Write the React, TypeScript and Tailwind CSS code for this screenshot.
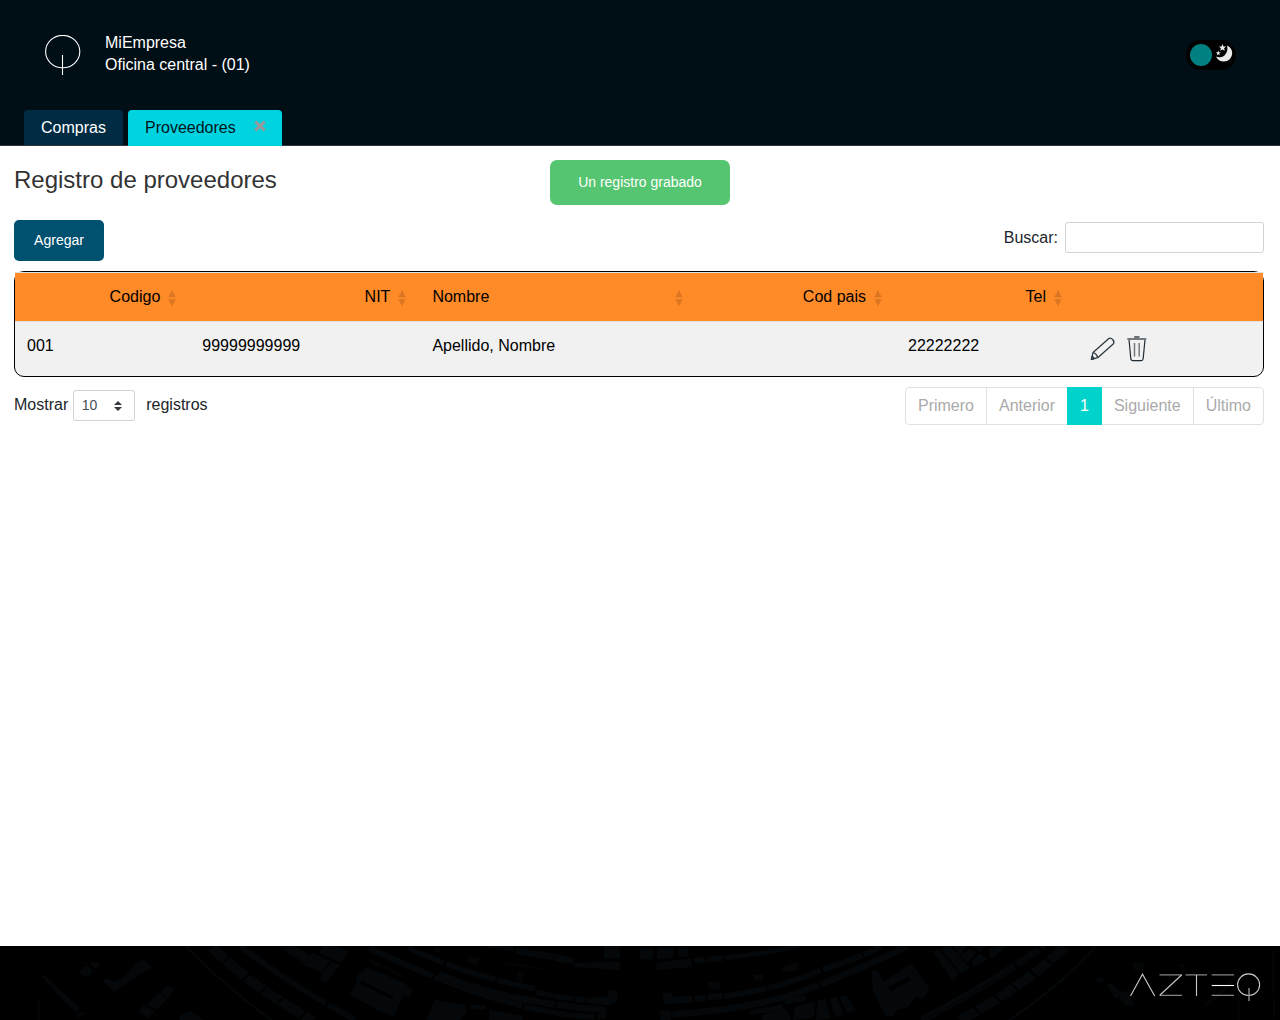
import React from "react";

const columns = [
  { label: "Codigo", align: "justify-end" },
  { label: "NIT", align: "justify-end" },
  { label: "Nombre", align: "justify-start" },
  { label: "Cod pais", align: "justify-end" },
  { label: "Tel", align: "justify-end" },
];

function QMark() {
  return (
    <svg width="36" height="42" viewBox="0 0 36 42" fill="none" stroke="#fff" strokeWidth="1.1">
      <ellipse cx="17.7" cy="16.6" rx="17.1" ry="16.2" />
      <path d="M17.5 20V40" />
    </svg>
  );
}

function ThemeSwitch() {
  return (
    <div className="flex h-[30px] w-[50px] items-center rounded-full bg-black pl-1">
      <span className="size-[22px] rounded-full bg-[#008080]" />
      <svg className="mb-[3px] ml-[3px]" width="19" height="20" viewBox="0 0 19 20" fill="#ebebeb">
        <path d="M12 1.6C15.2 2.8 17.2 5.6 17.2 9.2A8.3 8.3 0 0 1 8.9 17.6C5.3 17.6 2.2 15.6 1 12.6C4 14 7.4 13.4 9.7 11.2C12.2 8.8 13.2 5 12 1.6Z" />
        <path d="M7.5 0L8.5 2.5L11.1 2.6L9.1 4.2L9.8 6.8L7.5 5.4L5.2 6.8L5.9 4.2L3.9 2.6L6.5 2.5Z" />
        <path d="M3.3 6.5L3.9 8.2L5.7 8.3L4.3 9.4L4.8 11.2L3.3 10.2L1.8 11.2L2.3 9.4L.9 8.3L2.7 8.2Z" />
      </svg>
    </div>
  );
}

function SortArrows() {
  return (
    <svg width="8" height="17" viewBox="0 0 8 17" fill="#000" fillOpacity=".14">
      <path d="M4 0L7.7 7.3H.3Z" />
      <path d="M.3 9.2H7.7L4 16.5Z" />
    </svg>
  );
}

function Pencil() {
  return (
    <svg width="26" height="26" viewBox="0 0 26 26" fill="none" stroke="#2e3a42" strokeWidth="1.3" strokeLinejoin="round">
      <path d="M1.4 23.3L3 16.6L18.3 2.9Q20.3 1.2 22.7 3.5Q25 6 23.2 8L7.7 21.7Z" />
      <path d="M3 16.6Q6.8 17.5 7.7 21.7M1.4 23.3L4.3 22.6L2.3 20.3Z" />
    </svg>
  );
}

function Trash() {
  return (
    <svg width="20" height="26" viewBox="0 0 20 26" fill="none" stroke="#1f2a33" strokeWidth="1.2">
      <path d="M2 3.5L3.8 22.5Q4 24.6 6 24.6H14.2Q16 24.6 16.2 22.5L18 3.5" />
      <path d="M.3 3H19.3" stroke="#747a7f" strokeWidth="2" />
      <path d="M7.2 1H12.5" strokeWidth="1.5" stroke="#3a444b" />
      <path d="M7.5 7V20.5M12.2 7V20.5" stroke="#747a7f" strokeWidth="1.5" />
    </svg>
  );
}

function StreetMap() {
  return (
    <div className="absolute inset-0 grid grid-cols-2">
      <svg className="size-full" viewBox="0 30 1568 222" preserveAspectRatio="none" fill="#05080a" stroke="none">
        <path d="M97 115L110 120L195 215L190 228L180 225Z" />
        <path d="M332 85L350 70L372 94L350 110L300 150L280 168L252 135L262 127L280 139L306 120Z" />
        <path d="M200 95L215 90L228 104L216 122L194 115ZM222 82L240 80L246 92L230 97ZM208 78L216 82L206 92Z" />
        <path d="M410 147L430 160L410 185L392 172ZM388 170L410 188L385 220L358 207ZM352 206L378 226L366 246L337 228Z" />
        <path d="M93 190H97V252H93ZM185 238L205 226L208 230L190 246ZM440 240L465 225L500 252H440Z" />
        <path d="M683 34L722 30L760 58L745 80ZM765 50L808 75L790 110L742 86ZM790 30H825L853 48L835 80L783 52ZM812 78L833 86L798 140L782 128Z" />
        <path d="M898 93L990 140L1012 165L1003 182L988 176L965 240L930 226L857 176L870 150L876 118ZM882 142L960 190L966 182L886 134Z" fillRule="evenodd" />
        <path d="M905 65L985 115L990 127L960 112L945 96L918 92L902 78Z" opacity=".5" />
        <path d="M1065 192L1140 207L1145 230L1125 252H1045ZM1155 207L1190 207L1190 222L1152 218ZM1198 222L1280 240L1280 252H1198Z" />
        <path d="M1480 30H1518V68H1480ZM1405 80L1518 78V102L1405 92ZM1358 52L1405 65V84L1358 76ZM1263 36L1356 52V73L1265 54ZM1180 30H1255L1260 48Z" />
        <path d="M1438 186L1488 182L1492 162L1512 166V196L1490 208L1438 201ZM1408 180L1434 184V201L1408 199ZM1358 173L1404 180V196L1358 189ZM1314 160L1355 171V187L1314 178Z" />
        <path d="M1145 62L1175 64L1168 90L1146 78ZM1268 108H1282V136H1265ZM1240 78L1330 98V102L1240 84ZM1060 34L1080 36L1078 50L1065 46Z" opacity=".6" />
        <g fill="none" stroke="#05080a">
          <path d="M455 30Q540 140 665 252" strokeWidth="6" />
          <path d="M520 35Q620 155 765 252" strokeWidth="27" strokeDasharray="48 5 65 6 52 5" />
          <path d="M590 30Q710 145 870 250" strokeWidth="18" strokeDasharray="270 7" />
          <path d="M602 30Q720 145 880 250" stroke="#000" strokeWidth="2" />
          <path d="M905 36Q1100 150 1250 200T1485 240" strokeWidth="17" strokeDasharray="175 7 230 6" />
          <path d="M1000 36Q1150 120 1310 158" strokeWidth="16" strokeDasharray="98 6 130 6" />
          <path d="M1075 115Q1240 200 1485 222" strokeWidth="19" strokeDasharray="300 5" />
        </g>
      </svg>
      <svg className="size-full" viewBox="0 30 1568 222" preserveAspectRatio="none" fill="#05080a" stroke="none">
        <path d="M0 38H32V70H0ZM42 34H82V68H42ZM94 32L116 34L118 60L94 62ZM40 80L126 67V93L40 103ZM132 66L160 64V80L134 81ZM165 62L204 58V75L167 79Z" />
        <path d="M55 176L62 168L76 172L80 182L128 180V200L58 204ZM134 180L160 176V196L134 199ZM164 175L202 171V190L167 193ZM50 223L76 226V252H50Z" />
        <path d="M348 92L388 78V102L350 109ZM166 137L196 136V160L169 162ZM278 115L302 114V132L280 135Z" opacity=".8" />
        <path d="M718 48L732 38L780 112L768 138ZM736 36L760 30L808 95L786 112ZM766 30H803L782 58ZM784 58L808 38L824 50L801 82ZM812 30H850L834 48ZM812 82L830 52L850 68L820 92ZM852 38L880 30H900L860 70Z" />
        <path d="M568 105L582 102L596 138L664 82L710 158L692 188L675 184L655 214L629 222L622 240L602 242L570 160ZM606 155L618 166L665 130L656 122Z" fillRule="evenodd" />
        <path d="M268 225L350 203V224L272 235ZM355 187L406 180V195L356 204ZM380 210L430 197L425 245L375 252ZM436 193L454 189L468 248L430 252ZM464 188L482 184L500 235L480 245ZM488 183L505 177L528 222L508 232ZM298 238L360 218L370 252H300Z" />
        <path d="M1142 140L1160 146L1180 175L1165 190ZM1182 163L1195 170L1212 210L1194 208L1172 188ZM1114 130L1132 122L1138 134L1128 142Z" />
        <path d="M1205 80L1230 78L1240 100L1214 108ZM1318 86L1335 82L1332 95ZM1466 96L1470 100Q1440 180 1370 220Q1440 150 1466 96Z" opacity=".6" />
        <path d="M1464 160H1468V252H1464ZM1550 42H1554V170H1550ZM1551 180H1555V250H1551Z" opacity=".7" />
        <g fill="none" stroke="#05080a">
          <path d="M208 65Q310 52 390 30" strokeWidth="14" />
          <path d="M207 181Q330 160 440 104Q540 65 590 32" strokeWidth="17" strokeDasharray="105 4 140 6" />
          <path d="M80 235Q280 220 410 160Q540 100 655 30" strokeWidth="19" strokeDasharray="370 5" />
          <path d="M690 252Q850 150 990 30" strokeWidth="20" strokeDasharray="280 7 70 6" />
          <path d="M700 249Q850 153 1000 30" strokeWidth="2" stroke="#000" />
          <path d="M785 252Q930 160 1045 30" strokeWidth="27" strokeDasharray="48 5 55 7" />
          <path d="M905 252Q1030 150 1115 32" strokeWidth="6" />
        </g>
      </svg>
    </div>
  );
}

function AzteqLogo() {
  return (
    <svg className="relative" role="img" aria-label="AZTEQ" width="132" height="30" viewBox="0 0 132 30" fill="none" stroke="#c8c8c8" strokeWidth="1.1">
      <path d="M.5 24L12.5 2.2L24.7 24" />
      <path d="M29.5 2.8H52M29.5 23.3H52M55.5 2.8H77M81.7 2.8H104M81.7 23.3H104" stroke="#858585" strokeWidth="1.3" />
      <path d="M51.6 3L30 23" />
      <path d="M66.5 3V24" />
      <path d="M81.7 13.5H104" stroke="#fff" />
      <ellipse cx="118.6" cy="12.7" rx="11" ry="10.8" />
      <path d="M119 16V29" stroke="#999" strokeWidth="1.3" />
    </svg>
  );
}

export default function App() {
  return (
    <div className="flex h-[1020px] w-[1280px] flex-col overflow-hidden bg-white font-['Liberation_Sans',Arial,sans-serif] text-base text-[#212529]">
      <header className="flex h-[146px] shrink-0 flex-col justify-between border-b border-[#303438] bg-[#000e15] text-white">
        <div className="flex h-[110px] items-center justify-between px-11">
          <div className="flex items-center gap-6 pb-0.5 pl-px">
            <div className="pt-[3px]"><QMark /></div>
            <div className="leading-[22px]">
              <div>MiEmpresa</div>
              <div>Oficina central - (01)</div>
            </div>
          </div>
          <ThemeSwitch />
        </div>
        <nav className="-mb-px flex h-9 gap-[5px] pl-6">
          <div className="flex h-[35px] w-[99px] items-center justify-center rounded-t bg-[#002c43]">Compras</div>
          <div className="flex h-9 w-[154px] items-center justify-between rounded-t bg-[#00d3e0] pr-4 pb-px pl-[17px] text-[#00121a]">
            Proveedores
            <svg className="mb-[3px]" width="12" height="12" viewBox="0 0 12 12" stroke="#999" strokeWidth="3.1">
              <path d="M1.3 1.7L10.7 10.3M10.7 1.7L1.3 10.3" />
            </svg>
          </div>
        </nav>
      </header>

      <main className="flex-1 pr-4 pl-3.5">
        <div className="grid h-[74px] grid-cols-[536px_180px_1fr] pt-3.5">
          <h1 className="pt-0.5 text-2xl leading-9 text-[#333]">Registro de proveedores</h1>
          <div className="flex h-[45px] items-center justify-center rounded-[7px] bg-[#55c571] pb-0.5 text-sm text-white">Un registro grabado</div>
        </div>

        <div className="flex h-[51px] items-start justify-between">
          <button className="h-[41px] w-[90px] rounded-[5px] bg-[#00506f] pb-0.5 text-sm text-white">Agregar</button>
          <label className="mt-0.5 flex items-center gap-[7px]">
            Buscar:
            <input className="h-[31px] w-[199px] rounded-[3px] border border-[#ced4da] bg-white px-2 text-sm" />
          </label>
        </div>

        <section className="h-[106px] rounded-[10px] border border-black bg-[#f1f1f1] text-black">
          <div className="grid h-[50px] grid-cols-[175.3px_230.1px_276.6px_199px_180px_1fr] border-y border-t-[#dee2e6] border-b-[#e4e0dc] bg-[#ff8a28]">
            {columns.map((c) => (
              <div key={c.label} className={`flex items-center pb-px pl-3 ${c.align}`}>
                <span className={c.label === "Nombre" ? "flex-1" : ""}>{c.label}</span>
                <span className="mt-1 mr-3.5 ml-2"><SortArrows /></span>
              </div>
            ))}
            <div />
          </div>
          <div className="grid grid-cols-[175.3px_230.1px_276.6px_199px_180px_1fr] leading-6 [&>div]:pt-3 [&>div]:pl-3">
            <div>001</div>
            <div>99999999999</div>
            <div>Apellido, Nombre</div>
            <div />
            <div>22222222</div>
            <div className="flex gap-[11px]">
              <span className="ml-0.5 pt-0.5"><Pencil /></span>
              <span className="pt-0.5"><Trash /></span>
            </div>
          </div>
        </section>

        <div className="flex items-start justify-between pt-2.5">
          <div className="flex items-center pt-[3px]">
            <span className="pb-0.5">Mostrar</span>
            <div className="mr-[11px] ml-[5px] flex h-[31px] w-[62px] items-center justify-between rounded-[3px] border border-[#ced4da] pr-3 pl-2 text-sm text-[#495057]">
              <span className="-ml-px pb-0.5 pl-[0.5px]">10</span>
              <svg width="8" height="10" viewBox="0 0 8 10" fill="#343a40">
                <path d="M4 0L8 4H0ZM0 6H8L4 10Z" />
              </svg>
            </div>
            <span className="pb-0.5">registros</span>
          </div>
          <div className="flex h-[38px] rounded border border-[#dee2e6] leading-9 text-[#aaa]">
            <span className="px-3">Primero</span>
            <span className="border-l border-[#dee2e6] px-3">Anterior</span>
            <span className="-my-px bg-[#00d3cc] px-[13px] py-px text-white">1</span>
            <span className="px-3">Siguiente</span>
            <span className="border-l border-[#dee2e6] px-3">Último</span>
          </div>
        </div>
      </main>

      <footer className="relative flex h-[74px] shrink-0 items-center justify-end bg-black pr-[18px]">
        <StreetMap />
        <div className="relative mt-[7px]"><AzteqLogo /></div>
      </footer>
    </div>
  );
}
